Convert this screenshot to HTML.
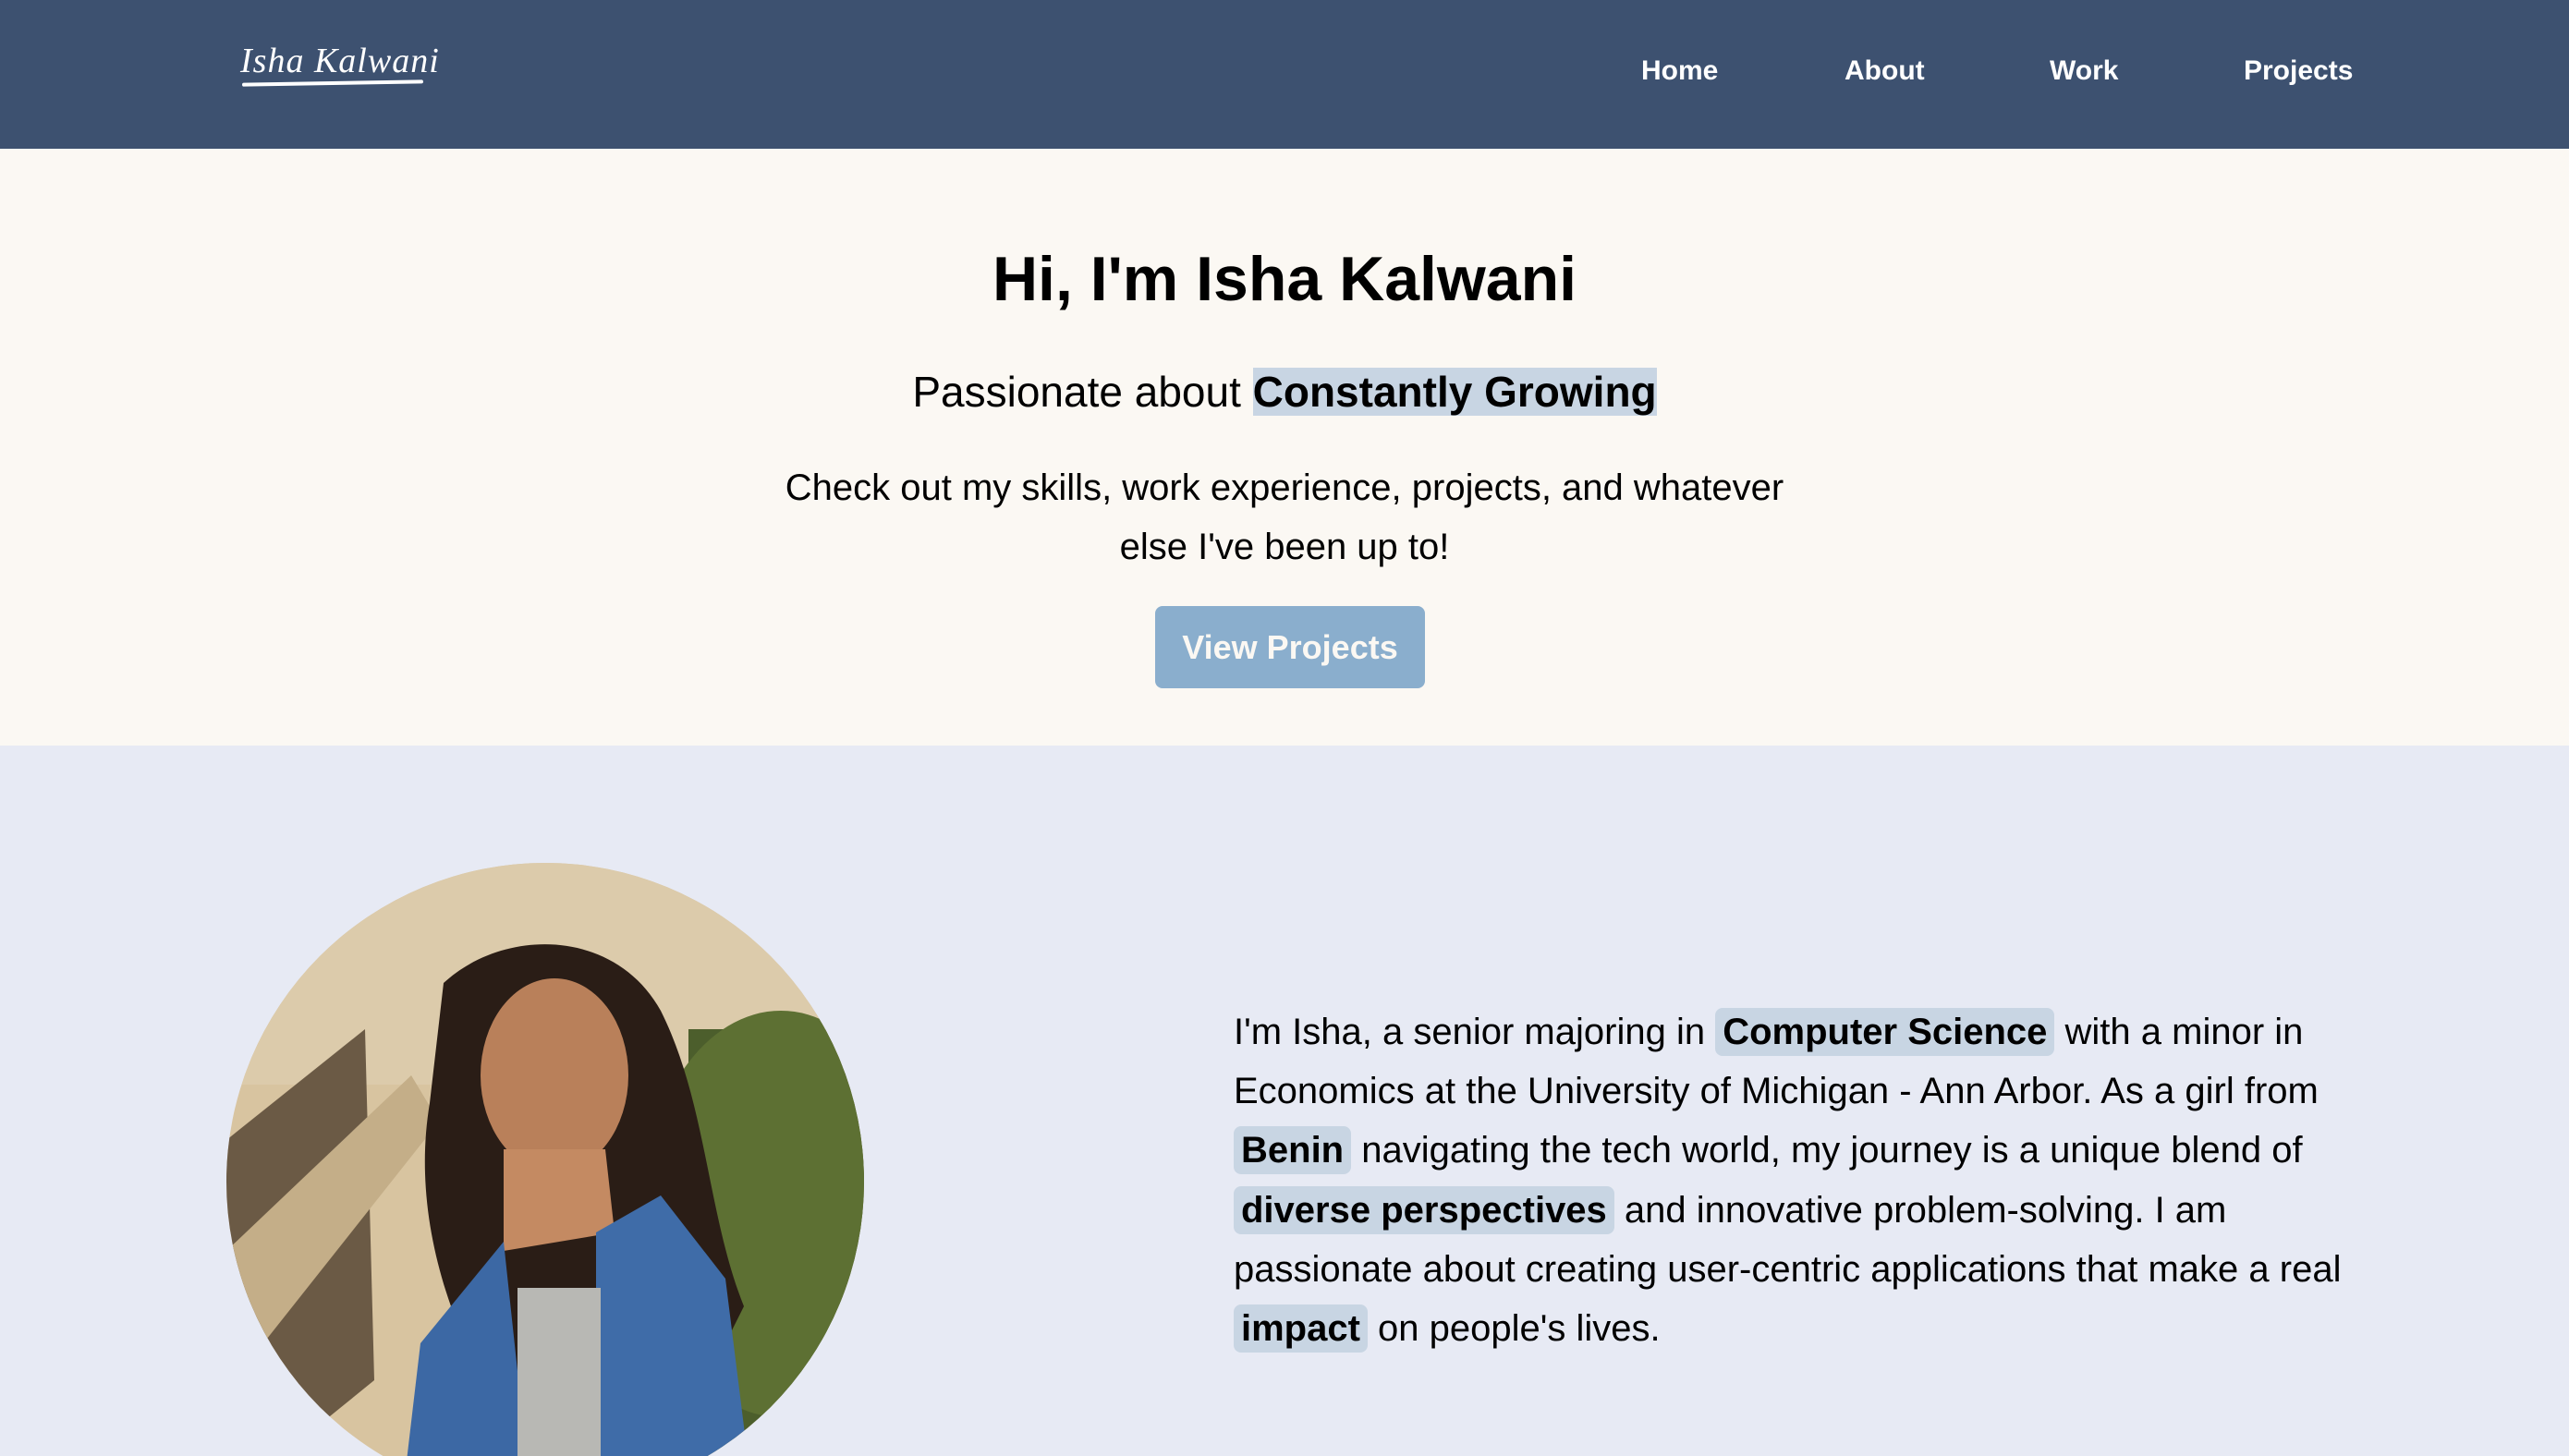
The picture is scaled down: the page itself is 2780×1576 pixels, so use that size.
<!DOCTYPE html>
<html><head><meta charset="utf-8"><style>
*{margin:0;padding:0;box-sizing:border-box}
html,body{width:2780px;height:1576px;overflow:hidden;font-family:"Liberation Sans",Arial,sans-serif;color:#000;position:relative}
nav{position:absolute;left:0;top:0;width:2780px;height:161px;background:#3d5170}
.logo{position:absolute;left:260px;top:44px;color:#fff;font-family:"Liberation Serif",serif;font-style:italic;font-size:38px;letter-spacing:1px}
.uline{position:absolute;left:262px;top:88px;width:196px;height:4px;background:#fff;border-radius:2px;transform:rotate(-1deg)}
.nl{position:absolute;top:60px;color:#fff;font-weight:bold;font-size:30px}
.hero{position:absolute;left:0;top:161px;width:2780px;height:646px;background:#fbf8f3}
.c{position:absolute;left:0;width:2780px;text-align:center}
h1{font-size:68px;font-weight:bold}
.hl{background:#c8d5e3;font-weight:bold}
.btn{position:absolute;left:1250px;top:656px;width:292px;height:89px;background:#8aaecd;border-radius:8px;color:#fbf8f3;font-weight:bold;font-size:36px;text-align:center;line-height:89px}
.about{position:absolute;left:0;top:807px;width:2780px;height:769px;background:#e7eaf4;overflow:hidden}
.txt{position:absolute;left:1335px;font-size:40px;line-height:64.2px;white-space:nowrap}
.t{background:#c8d5e3;font-weight:bold;padding:4px 8px;border-radius:8px}
</style></head><body>
<nav>
<div class="logo">Isha Kalwani</div><div class="uline"></div>
<div class="nl" style="left:1776px">Home</div>
<div class="nl" style="left:1996px">About</div>
<div class="nl" style="left:2218px">Work</div>
<div class="nl" style="left:2428px">Projects</div>
</nav>
<div class="hero">
<h1 class="c" style="top:102px">Hi, I'm Isha Kalwani</h1>
<div class="c" style="top:236px;font-size:46px">Passionate about <span class="hl">Constantly Growing</span></div>
<div class="c" style="top:335px;font-size:40px;line-height:64px">Check out my skills, work experience, projects, and whatever<br>else I've been up to!</div>
</div>
<div class="btn">View Projects</div>
<div class="about">
<svg style="position:absolute;left:245px;top:127px" width="690" height="690" viewBox="0 0 690 690">
<defs><clipPath id="cp"><circle cx="345" cy="345" r="345"/></clipPath></defs>
<g clip-path="url(#cp)">
<rect width="690" height="690" fill="#d8c4a0"/>
<rect x="0" y="0" width="690" height="240" fill="#dccbab"/>
<polygon points="0,300 150,180 160,560 0,690" fill="#6b5a45"/>
<polygon points="0,420 200,230 230,280 40,520" fill="#c4ae88"/>
<rect x="500" y="180" width="190" height="510" fill="#4c5e2c"/>
<ellipse cx="600" cy="380" rx="150" ry="220" fill="#5d7033"/>
<path d="M235 130 C300 70 420 70 470 160 C520 260 520 380 560 480 L520 560 L300 600 C240 500 200 380 220 260 Z" fill="#2a1d16"/>
<ellipse cx="355" cy="230" rx="80" ry="105" fill="#b9805a"/>
<path d="M300 310 L410 310 L420 400 L300 420 Z" fill="#c48a62"/>
<path d="M190 690 L210 520 L300 410 L330 690 Z" fill="#3c68a4"/>
<path d="M400 690 L400 400 L470 360 L540 450 L570 690 Z" fill="#3f6ca8"/>
<rect x="315" y="460" width="90" height="230" fill="#b8b8b4"/>
</g></svg>
<div class="txt" style="top:278px">I'm Isha, a senior majoring in <span class="t">Computer Science</span> with a minor in<br>Economics at the University of Michigan - Ann Arbor. As a girl from<br><span class="t">Benin</span> navigating the tech world, my journey is a unique blend of<br><span class="t">diverse perspectives</span> and innovative problem-solving. I am<br>passionate about creating user-centric applications that make a real<br><span class="t">impact</span> on people's lives.</div>
</div>
</body></html>
